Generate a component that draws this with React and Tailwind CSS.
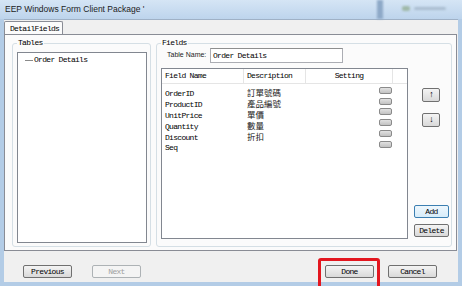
import React from "react";

const mono = "font-['Liberation_Mono',monospace] text-[8px] leading-none tracking-[-0.7px] font-normal text-[#000]";
const cjk = "font-['Noto_Sans_CJK_TC','Noto_Sans_CJK_SC',sans-serif] text-[8.5px] leading-none text-[#1a1a1a]";

const rows = [
  { name: "OrderID", desc: "訂單號碼" },
  { name: "ProductID", desc: "產品編號" },
  { name: "UnitPrice", desc: "單價" },
  { name: "Quantity", desc: "數量" },
  { name: "Discount", desc: "折扣" },
  { name: "Seq", desc: "" },
];

function Btn({ children, className = "", disabled, focused }) {
  const look = disabled
    ? "border-[#adb2b5] bg-[#f4f4f4] !text-[#a0a0a0]"
    : focused
    ? "border-[#3c7fb1] bg-linear-to-b from-[#eef7fd] to-[#d7ecf9]"
    : "border-[#707070] bg-linear-to-b from-[#f4f4f4] to-[#d9d9d9]";
  return (
    <div className={`flex items-center justify-center rounded-[2px] border ${look} ${mono} ${className}`}>
      {children}
    </div>
  );
}

function GroupBox({ label, className = "", children }) {
  return (
    <div className={`relative rounded-[3px] border border-[#d5dfe5] ${className}`}>
      <span className={`absolute -top-[5px] left-[4px] bg-[#fbfbfb] px-[1px] ${mono}`}>{label}</span>
      {children}
    </div>
  );
}

export default function App() {
  return (
    <div className="flex h-[286px] w-[462px] flex-col overflow-hidden bg-[#b3cce6]">
      {/* title bar */}
      <div className="relative flex h-[19px] shrink-0 items-center bg-linear-to-b from-[#d5e5f5] to-[#bdd4ec] pl-[5px]">
        <span className="font-['Liberation_Sans',Arial,sans-serif] text-[8.5px] text-[#1c1c1c]">
          EEP Windows Form Client Package '
        </span>
        <div className="absolute top-0 bottom-0 left-[377px] w-[6px] bg-[#8ea9c8] blur-[1px]" />
        <div className="absolute top-[6px] left-[402px] h-[5px] w-[8px] rounded-[2px] bg-[#9fb8a8] blur-[1px]" />
        <div className="absolute top-[7px] left-[414px] h-[3px] w-[32px] rounded-[2px] bg-[#a9bccf] blur-[1px]" />
      </div>

      {/* client */}
      <div className="mx-[4px] mb-[4px] flex flex-1 flex-col border-t border-[#9fb1c6] bg-[#f0f0f0] pt-[1px]">
        {/* tab strip */}
        <div className="flex h-[14px] shrink-0">
          <div className="flex w-[59px] items-center rounded-t-[2px] border-x border-t border-[#898c95] bg-[#fbfbfb] pl-[5px]">
            <span className={mono}>DetailFields</span>
          </div>
        </div>

        {/* tab panel */}
        <div className="-mt-px mr-px flex h-[217px] shrink-0 border border-[#898c95] bg-[#fbfbfb] pt-[8px] pl-[7px]">
          <GroupBox label="Tables" className="h-[204px] w-[139px] pt-[8px] pl-[4px]">
            <div className="h-[191px] w-[130px] border border-[#828790] bg-white pt-[1px] pl-[7px]">
              <div className="flex h-[12px] items-center">
                <div className="mr-[1px] h-px w-[8px] bg-[#8a8a8a]" />
                <span className={mono}>Order Details</span>
              </div>
            </div>
          </GroupBox>

          <GroupBox label="Fields" className="ml-[5px] h-[204px] w-[296px] pt-[4px] pl-[4px]">
            <div className="flex h-[15px] items-center pl-[6px]">
              <span className="w-[43px] font-['Liberation_Sans',Arial,sans-serif] text-[7px] text-[#1c1c1c]">
                Table Name:
              </span>
              <div className="flex h-[15px] w-[133px] items-center border border-[#abadb3] border-t-[#8e8f8f] bg-white pl-[2px]">
                <span className={mono}>Order Details</span>
              </div>
            </div>

            <div className="mt-[5px] flex">
              {/* list view */}
              <div className="h-[171px] w-[247px] border border-[#828790] bg-white">
                <div className="flex h-[15px] border-b border-[#e5e5e5]">
                  <div className="flex w-[82px] items-center border-r border-[#e5e5e5] pl-[3px]">
                    <span className={mono}>Field Name</span>
                  </div>
                  <div className="flex w-[62px] items-center border-r border-[#e5e5e5] pl-[3px]">
                    <span className={mono}>Description</span>
                  </div>
                  <div className="flex w-[87px] items-center justify-center border-r border-[#e5e5e5]">
                    <span className={mono}>Setting</span>
                  </div>
                </div>
                <div className="pt-[1px]">
                  {rows.map((r) => (
                    <div key={r.name} className="flex h-[10.8px] items-center">
                      <div className="w-[82px] pl-[3px]">
                        <span className={mono}>{r.name}</span>
                      </div>
                      <div className="w-[62px] pl-[3px]">
                        <span className={cjk}>{r.desc}</span>
                      </div>
                      <div className="flex w-[87px] justify-end pr-[1px]">
                        <div className="h-[7px] w-[13px] rounded-[2px] border border-[#8a8a8a] bg-linear-to-b from-[#e2e2e2] to-[#c2c2c2]" />
                      </div>
                    </div>
                  ))}
                </div>
              </div>

              {/* side buttons */}
              <div className="flex h-[171px] w-[43px] flex-col">
                <Btn className="mt-[20px] ml-[14px] h-[14px] w-[18px] !text-[9px]">↑</Btn>
                <Btn className="mt-[11px] ml-[14px] h-[14px] w-[18px] !text-[9px]">↓</Btn>
                <Btn focused className="mt-auto ml-[6px] h-[13px] w-[35px]">Add</Btn>
                <Btn className="mt-[6px] mb-[2px] ml-[6px] h-[13px] w-[35px]">Delete</Btn>
              </div>
            </div>
          </GroupBox>
        </div>

        {/* bottom buttons */}
        <div className="flex flex-1 justify-between pt-[14px] pr-[21px] pl-[19px]">
          <div className="flex gap-[20px]">
            <Btn className="h-[13px] w-[49px]">Previous</Btn>
            <Btn disabled className="h-[13px] w-[49px]">Next</Btn>
          </div>
          <div className="flex gap-[14px]">
            <div className="relative">
              <Btn className="h-[13px] w-[49px]">Done</Btn>
              <div className="absolute -top-[7px] -right-[6px] -bottom-[7px] -left-[7px] rounded-[3px] border-[3px] border-[#e3161f]" />
            </div>
            <Btn className="h-[13px] w-[49px]">Cancel</Btn>
          </div>
        </div>
      </div>
    </div>
  );
}
